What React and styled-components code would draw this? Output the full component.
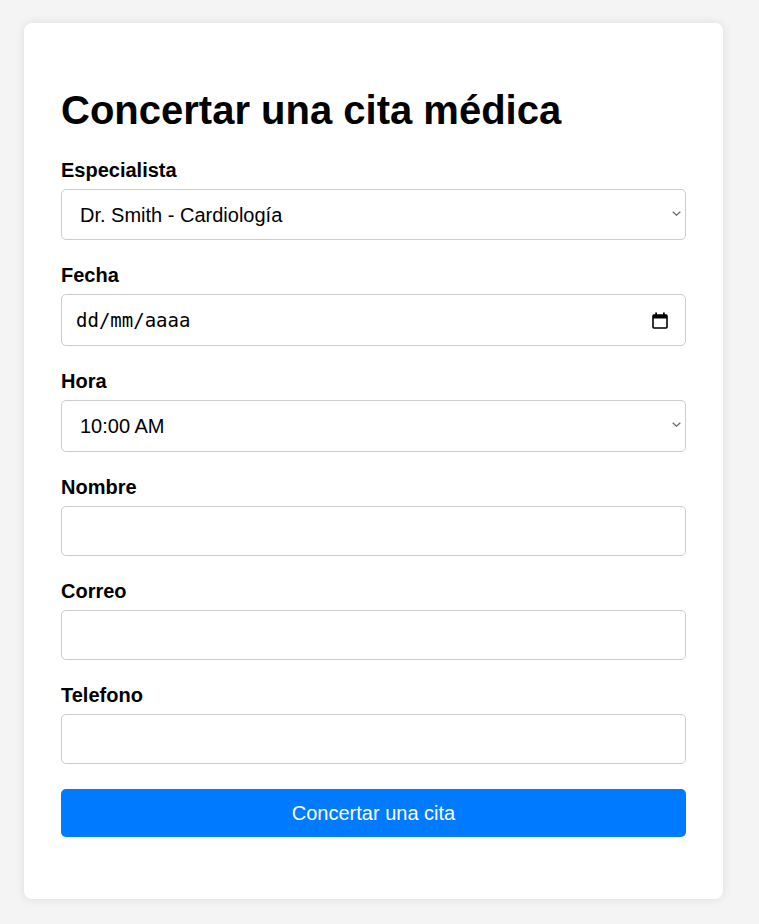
import React from 'react';
import styled, { createGlobalStyle } from 'styled-components';

const GlobalStyle = createGlobalStyle`
  body {
    margin: 0;
    background: #f4f4f4;
    font-family: "Liberation Sans", Arial, sans-serif;
    font-size: 20px;
    color: #000;
  }
`

const Page = styled.div`
  padding: 23px 24px 25px;
`

const Card = styled.div`
  width: 699px;
  box-sizing: border-box;
  background: #fff;
  border-radius: 8px;
  box-shadow: 0 0 10px rgba(0, 0, 0, 0.1);
  padding: 37px 37px 62px;
`

const Title = styled.h1`
  font-size: 40px;
  line-height: 46px;
  font-weight: bold;
  margin: 27px 0 26px;
`

const Field = styled.div`
  margin-bottom: 24px;
`

const Label = styled.label`
  display: block;
  font-weight: bold;
  font-size: 20px;
  line-height: 23px;
  margin-bottom: 7px;
`

const Box = styled.div`
  position: relative;
`

const Select = styled.select`
  appearance: none;
  width: 100%;
  height: ${p => p.$tall ? 52 : 51}px;
  box-sizing: border-box;
  border: 1px solid #ccc;
  border-radius: 5px;
  background: #fff;
  padding: 0 30px 0 18px;
  font-family: "Liberation Sans", Arial, sans-serif;
  font-size: 20px;
  color: #000;
`

const Chevron = styled.svg`
  position: absolute;
  right: 5px;
  top: 22px;
  pointer-events: none;
`

const DateBox = styled.div`
  height: 52px;
  box-sizing: border-box;
  border: 1px solid #ccc;
  border-radius: 5px;
  display: flex;
  align-items: center;
  justify-content: space-between;
  padding: 0 17px 0 14px;
  font-family: "DejaVu Sans Mono", "Liberation Mono", monospace;
  font-size: 19px;
`

const Input = styled.input`
  display: block;
  width: 100%;
  height: 50px;
  box-sizing: border-box;
  border: 1px solid #ccc;
  border-radius: 5px;
  padding: 0 14px;
  font-family: "Liberation Sans", Arial, sans-serif;
  font-size: 20px;
`

const Button = styled.button`
  display: block;
  width: 100%;
  height: 48px;
  border: none;
  border-radius: 5px;
  background: #007bff;
  color: #fff;
  font-family: "Liberation Sans", Arial, sans-serif;
  font-size: 20px;
  margin-top: 25px;
`

const Arrow = () => (
  <Chevron width="9" height="5" viewBox="0 0 9 5">
    <polyline points="0.7,0.7 4.5,4.2 8.3,0.7" fill="none" stroke="#6b6b6b" strokeWidth="1.3" />
  </Chevron>
)

const CalendarIcon = () => (
  <svg width="16" height="17" viewBox="0 0 16 17">
    <rect x="1" y="3" width="14" height="13" rx="1" fill="none" stroke="#000" strokeWidth="1.6" />
    <rect x="1" y="3" width="14" height="3.5" fill="#000" />
    <rect x="3.2" y="0.5" width="1.8" height="3" fill="#000" />
    <rect x="11" y="0.5" width="1.8" height="3" fill="#000" />
  </svg>
)

export default function App() {
  return (
    <Page>
      <GlobalStyle />
      <Card>
        <Title>Concertar una cita médica</Title>
        <form onSubmit={e => e.preventDefault()}>
          <Field>
            <Label>Especialista</Label>
            <Box>
              <Select defaultValue="smith">
                <option value="smith">Dr. Smith - Cardiología</option>
                <option value="jones">Dr. Jones - Dermatología</option>
              </Select>
              <Arrow />
            </Box>
          </Field>
          <Field>
            <Label>Fecha</Label>
            <DateBox>
              <span>dd/mm/aaaa</span>
              <CalendarIcon />
            </DateBox>
          </Field>
          <Field>
            <Label>Hora</Label>
            <Box>
              <Select $tall defaultValue="10">
                <option value="10">10:00 AM</option>
                <option value="11">11:00 AM</option>
              </Select>
              <Arrow />
            </Box>
          </Field>
          <Field>
            <Label>Nombre</Label>
            <Input type="text" />
          </Field>
          <Field>
            <Label>Correo</Label>
            <Input type="email" />
          </Field>
          <Field>
            <Label>Telefono</Label>
            <Input type="tel" />
          </Field>
          <Button type="submit">Concertar una cita</Button>
        </form>
      </Card>
    </Page>
  )
}
